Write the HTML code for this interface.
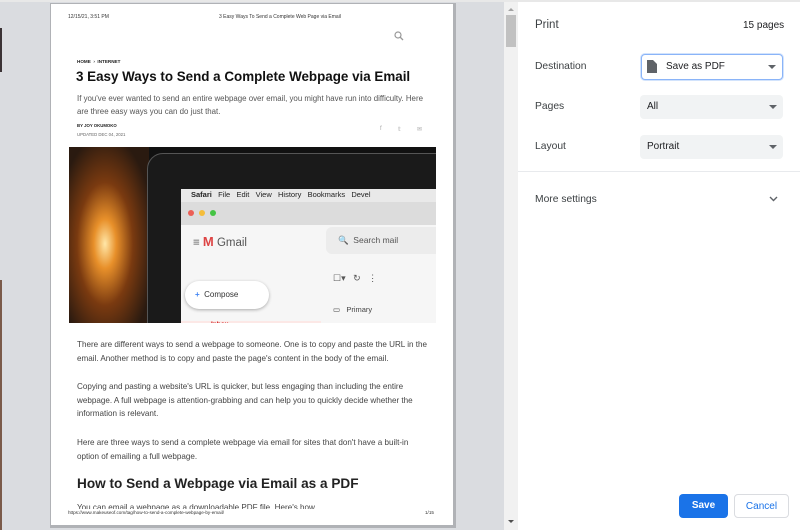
<!DOCTYPE html>
<html><head><meta charset="utf-8"><style>
*{margin:0;padding:0;box-sizing:border-box}
body{width:800px;height:530px;overflow:hidden;background:#dadce0;font-family:"Liberation Sans",Arial,sans-serif;position:relative}
.a{position:absolute}
.page{left:51px;top:4px;width:402px;height:521px;background:#fff;box-shadow:1px 1px 0 2px #b0b2b6;overflow:hidden}
.p{font-size:8.1px;color:#444;line-height:13.5px;left:26px;width:352px}
.sel{left:640px;width:143px;height:24px;background:#f1f3f4;border-radius:4px;font-size:10px;color:#202124;padding:0 0 0 7px;line-height:24px}
.sel:after{content:"";position:absolute;right:6px;top:10px;border:4px solid transparent;border-top:4px solid #5f6368}
.lab{left:535px;font-size:10.3px;color:#3c4043}
</style></head><body>
<div class="a" style="left:0;top:0;width:800px;height:2px;background:#e8e8e8"></div>
<div class="a" style="left:0;top:28px;width:2px;height:44px;background:#3b3335"></div>
<div class="a" style="left:0;top:280px;width:2px;height:250px;background:#7a5a4a"></div>
<div class="a page">
 <div class="a" style="left:17px;top:10px;font-size:5px;color:#333">12/15/21, 3:51 PM</div>
 <div class="a" style="left:168px;top:10px;font-size:5px;color:#333">3 Easy Ways To Send a Complete Web Page via Email</div>
 <svg class="a" style="left:343px;top:27px" width="10" height="10" viewBox="0 0 10 10"><circle cx="4" cy="4" r="3" fill="none" stroke="#999" stroke-width="1.2"/><path d="M6 6l3 3" stroke="#999" stroke-width="1.3"/></svg>
 <div class="a" style="left:26px;top:55px;font-size:4.6px;font-weight:bold;color:#222">HOME &nbsp;›&nbsp; INTERNET</div>
 <div class="a" style="left:25px;top:65px;font-size:13.4px;font-weight:bold;color:#111">3 Easy Ways to Send a Complete Webpage via Email</div>
 <div class="a" style="left:26px;top:88px;width:352px;font-size:7.9px;line-height:13px;color:#555">If you've ever wanted to send an entire webpage over email, you might have run into difficulty. Here are three easy ways you can do just that.</div>
 <div class="a" style="left:26px;top:119px;font-size:4.3px;font-weight:bold;color:#222">BY JOY OKUMOKO</div>
 <div class="a" style="left:26px;top:128px;font-size:4.3px;color:#666">UPDATED DEC 04, 2021</div>
 <div class="a" style="left:329px;top:122px;font-size:6px;color:#aaa">f</div>
 <div class="a" style="left:347px;top:122px;font-size:6px;color:#aaa">𝕥</div>
 <div class="a" style="left:366px;top:122px;font-size:6px;color:#aaa">✉</div>
 <div class="a" style="left:18px;top:143px;width:367px;height:176px;background:#111;overflow:hidden">
  <div class="a" style="left:0;top:0;width:80px;height:176px;background:radial-gradient(ellipse at 45% 55%,#ffe7a8 0,#e8902a 18%,#7a3a10 45%,#2a1a10 80%)"></div>
  <div class="a" style="left:78px;top:6px;width:300px;height:180px;border-radius:16px 0 0 0;background:#1a1a1a;border:1px solid #555"></div>
  <div class="a" style="left:112px;top:42px;width:260px;height:140px;background:#f6f6f6">
   <div style="height:13px;background:#e9e9e9;font-size:7.5px;color:#222;padding:1px 0 0 10px;white-space:nowrap"><b>Safari</b>&nbsp;&nbsp; File &nbsp; Edit &nbsp; View &nbsp; History &nbsp; Bookmarks &nbsp; Devel</div>
   <div style="height:23px;background:#dcdcdc;position:relative">
    <span class="a" style="left:7px;top:8px;width:6px;height:6px;border-radius:50%;background:#ec5f56"></span>
    <span class="a" style="left:18px;top:8px;width:6px;height:6px;border-radius:50%;background:#f5bd3a"></span>
    <span class="a" style="left:29px;top:8px;width:6px;height:6px;border-radius:50%;background:#45c444"></span>
   </div>
   <div class="a" style="left:12px;top:45px;font-size:11.5px;color:#555">≡ <b style="color:#d44;font-size:13px">M</b> Gmail</div>
   <div class="a" style="left:145px;top:38px;width:120px;height:27px;background:#ececec;border-radius:6px;font-size:8.5px;color:#555;padding:8px 0 0 12px">🔍 &nbsp;Search mail</div>
   <div class="a" style="left:4px;top:92px;width:84px;height:28px;background:#fff;border-radius:14px;box-shadow:0 1px 3px #aaa;font-size:8px;color:#333;padding:9px 0 0 10px"><b style="color:#4285f4">+</b>&nbsp; Compose</div>
   <div class="a" style="left:152px;top:84px;font-size:9px;color:#555">☐▾ &nbsp; ↻ &nbsp; ⋮</div>
   <div class="a" style="left:152px;top:116px;font-size:7.5px;color:#444">▭ &nbsp; Primary</div>
   <div class="a" style="left:0;top:132px;width:140px;height:10px;background:#fce8e6;font-size:6.5px;color:#c00;padding-left:30px;font-weight:bold">Inbox</div>
  </div>
 </div>
 <div class="a p" style="top:334px">There are different ways to send a webpage to someone. One is to copy and paste the URL in the email. Another method is to copy and paste the page's content in the body of the email.</div>
 <div class="a p" style="top:376px">Copying and pasting a website's URL is quicker, but less engaging than including the entire webpage. A full webpage is attention-grabbing and can help you to quickly decide whether the information is relevant.</div>
 <div class="a p" style="top:432px">Here are three ways to send a complete webpage via email for sites that don't have a built-in option of emailing a full webpage.</div>
 <div class="a" style="left:26px;top:472px;font-size:13.6px;font-weight:bold;color:#222">How to Send a Webpage via Email as a PDF</div>
 <div class="a" style="left:26px;top:499px;font-size:8.1px;color:#444;height:6px;overflow:hidden">You can email a webpage as a downloadable PDF file. Here's how</div>
 <div class="a" style="left:17px;top:506px;font-size:4.6px;color:#333">https://www.makeuseof.com/tag/how-to-send-a-complete-webpage-by-email/</div>
 <div class="a" style="left:374px;top:506px;font-size:4.6px;color:#333">1/15</div>
</div>
<div class="a" style="left:504px;top:2px;width:14px;height:528px;background:#f1f1f1"></div>
<div class="a" style="left:506px;top:15px;width:10px;height:32px;background:#c1c1c1"></div>
<div class="a" style="left:508px;top:5px;border:3px solid transparent;border-bottom:3px solid #a3a3a3"></div>
<div class="a" style="left:508px;top:520px;border:3px solid transparent;border-top:3px solid #505050"></div>
<div class="a" style="left:518px;top:2px;width:282px;height:528px;background:#fff"></div>
<div class="a" style="left:518px;top:171px;width:282px;height:1px;background:#e8eaed"></div>
<div class="a" style="left:535px;top:19px;font-size:11.5px;color:#3c4043">Print</div>
<div class="a" style="left:743px;top:20px;font-size:10px;color:#202124">15 pages</div>
<div class="a lab" style="top:61px">Destination</div>
<div class="a sel" style="top:54px;left:641px;width:142px;height:26px;background:#fff;border:1px solid #8ab4f8;box-shadow:0 0 0 1px #d2e3fc;padding-left:24px;line-height:24px">Save as PDF</div>
<svg class="a" style="left:647px;top:60px" width="10" height="13" viewBox="0 0 10 13"><path d="M0 0h6l4 4v9H0z" fill="#5f6368"/></svg>
<div class="a lab" style="top:101px">Pages</div>
<div class="a sel" style="top:95px">All</div>
<div class="a lab" style="top:141px">Layout</div>
<div class="a sel" style="top:135px">Portrait</div>
<div class="a lab" style="top:194px">More settings</div>
<svg class="a" style="left:769px;top:196px" width="9" height="6" viewBox="0 0 9 6"><path d="M1 1l3.5 3.5L8 1" fill="none" stroke="#5f6368" stroke-width="1.4"/></svg>
<div class="a" style="left:679px;top:494px;width:49px;height:24px;background:#1a73e8;border-radius:4px;color:#fff;font-size:10px;font-weight:bold;text-align:center;line-height:24px">Save</div>
<div class="a" style="left:734px;top:494px;width:55px;height:24px;border:1px solid #dadce0;border-radius:4px;color:#1a73e8;font-size:10px;text-align:center;line-height:23px">Cancel</div>
</body></html>
